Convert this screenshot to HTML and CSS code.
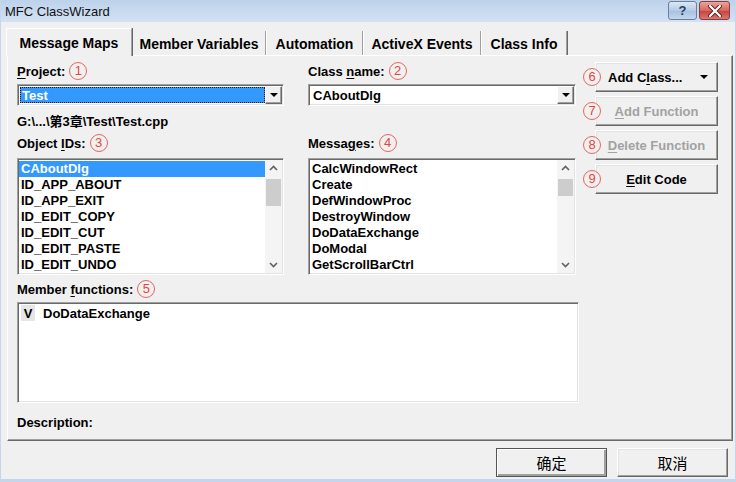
FILE: index.html
```html
<!DOCTYPE html>
<html>
<head>
<meta charset="utf-8">
<title>MFC ClassWizard</title>
<link rel="stylesheet" href="styles.css">
</head>
<body>
<div class="window">
  <div class="titlebar">
    <span class="title">MFC ClassWizard</span>
    <div class="tb-buttons">
      <span class="tb-btn tb-help">?</span>
      <span class="tb-btn tb-close">
        <svg width="14" height="12" viewBox="0 0 14 12"><path d="M2 1 L12 11 M12 1 L2 11" stroke="#5a2020" stroke-width="4" stroke-linecap="round"/><path d="M2 1 L12 11 M12 1 L2 11" stroke="#ffffff" stroke-width="2.2" stroke-linecap="round"/></svg>
      </span>
    </div>
  </div>
  <div class="client">
    <div class="tabs">
      <div class="tab active w1">Message Maps</div>
      <div class="tab w2">Member Variables</div>
      <div class="tab w3">Automation</div>
      <div class="tab w4">ActiveX Events</div>
      <div class="tab w5">Class Info</div>
    </div>
    <div class="panel">
      <div class="top">
        <div class="label c1 r1"><span><u>P</u>roject:</span><span class="circ">1</span></div>
        <div class="combo c1 r2">
          <div class="field selected"><span class="focus">Test</span></div>
          <div class="arrow"><span class="tri"></span></div>
        </div>
        <div class="path c1 r3">G:\...\第3章\Test\Test.cpp</div>
        <div class="label c1 r4"><span>Object <u>I</u>Ds:</span><span class="circ">3</span></div>
        <div class="listbox c1 r5">
          <div class="items">
            <div class="item sel">CAboutDlg</div>
            <div class="item">ID_APP_ABOUT</div>
            <div class="item">ID_APP_EXIT</div>
            <div class="item">ID_EDIT_COPY</div>
            <div class="item">ID_EDIT_CUT</div>
            <div class="item">ID_EDIT_PASTE</div>
            <div class="item">ID_EDIT_UNDO</div>
          </div>
          <div class="scroll">
            <svg class="chev" width="17" height="17" viewBox="0 0 17 17"><path d="M5 10 L8.5 6.5 L12 10" fill="none" stroke="#606060" stroke-width="1.6"/></svg>
            <div class="track"><div class="thumb t1"></div></div>
            <svg class="chev" width="17" height="17" viewBox="0 0 17 17"><path d="M5 7 L8.5 10.5 L12 7" fill="none" stroke="#606060" stroke-width="1.6"/></svg>
          </div>
        </div>

        <div class="label c3 r1"><span>Class <u>n</u>ame:</span><span class="circ">2</span></div>
        <div class="combo c3 r2">
          <div class="field">CAboutDlg</div>
          <div class="arrow"><span class="tri"></span></div>
        </div>
        <div class="label c3 r4"><span>Messa<u>g</u>es:</span><span class="circ">4</span></div>
        <div class="listbox c3 r5">
          <div class="items">
            <div class="item">CalcWindowRect</div>
            <div class="item">Create</div>
            <div class="item">DefWindowProc</div>
            <div class="item">DestroyWindow</div>
            <div class="item">DoDataExchange</div>
            <div class="item">DoModal</div>
            <div class="item">GetScrollBarCtrl</div>
          </div>
          <div class="scroll">
            <svg class="chev" width="17" height="17" viewBox="0 0 17 17"><path d="M5 10 L8.5 6.5 L12 10" fill="none" stroke="#606060" stroke-width="1.6"/></svg>
            <div class="track"><div class="thumb t2"></div></div>
            <svg class="chev" width="17" height="17" viewBox="0 0 17 17"><path d="M5 7 L8.5 10.5 L12 7" fill="none" stroke="#606060" stroke-width="1.6"/></svg>
          </div>
        </div>

        <div class="btncol c5">
          <div class="bwrap"><span class="circ over">6</span><div class="btn addclass"><span>Add C<u>l</u>ass...</span><span class="btri"></span></div></div>
          <div class="bwrap"><span class="circ over">7</span><div class="btn disabled"><u>A</u>dd Function</div></div>
          <div class="bwrap"><span class="circ over">8</span><div class="btn disabled"><u>D</u>elete Function</div></div>
          <div class="bwrap"><span class="circ over">9</span><div class="btn"><u>E</u>dit Code</div></div>
        </div>
      </div>

      <div class="label mlabel"><span>Member <u>f</u>unctions:</span><span class="circ">5</span></div>
      <div class="memberlist">
        <div class="mitem"><span class="vbox">V</span><span>DoDataExchange</span></div>
      </div>
      <div class="desc">Description:</div>
    </div>
    <div class="footer">
      <div class="fbtn ok">确定</div>
      <div class="fbtn">取消</div>
    </div>
  </div>
</div>
</body>
</html>
```
FILE: styles.css
```css
* { box-sizing: border-box; }
html, body { margin: 0; padding: 0; }
body {
  width: 736px; height: 482px; overflow: hidden;
  background: #f0f0f0;
  font-family: "Liberation Sans", Arial, sans-serif;
  font-size: 13px; font-weight: bold; color: #000;
}
u { text-decoration: underline; text-underline-offset: 2px; }
.window {
  width: 736px; height: 482px;
  display: flex; flex-direction: column;
  border-left: 1px solid #c3d6ec;
  border-right: 1px solid #c3d6ec;
  border-bottom: 3px solid #c3d6ec;
}
.titlebar {
  height: 22px; flex: none;
  display: flex; align-items: center;
  padding: 0 5px 0 4px;
  background: linear-gradient(#bcd2eb, #d3e2f3);
}
.title { font-weight: normal; font-size: 13px; color: #111; }
.tb-buttons { margin-left: auto; display: flex; gap: 2px; align-self: flex-start; margin-top: 1px; }
.tb-btn {
  height: 19px; display: flex; align-items: center; justify-content: center;
  border: 1px solid #6d7f98; border-radius: 3px;
}
.tb-help {
  width: 29px; color: #2c3e5a; font-size: 13px; font-weight: bold;
  background: linear-gradient(#dbe7f5, #b4cbe6 50%, #a6c0e0 51%, #c3d6ee);
}
.tb-close {
  width: 31px; border-color: #8a3b3b;
  background: linear-gradient(#eba59a, #d9645a 50%, #c7423a 51%, #d8776e);
}
.client { flex: 1; display: flex; flex-direction: column; padding: 0 3px 0 5px; }
.tabs { margin-top: 6px; height: 27px; display: flex; align-items: flex-end; padding-left: 0; }
.tab {
  height: 24px; display: flex; align-items: center; justify-content: center;
  font-size: 14px; padding-top: 1px;
  border-left: 1px solid #fff;
  border-right: 1px solid #a0a0a0;
  box-shadow: 1px 0 0 #696969;
}
.tab.active {
  height: 28px; margin-bottom: -1px; position: relative; z-index: 1;
  background: #f0f0f0; border-top: 1px solid #fff; padding-top: 0;
}
.w1 { width: 126px; }
.w2 { width: 134px; }
.w3 { width: 97px; }
.w4 { width: 118px; }
.w5 { width: 86px; }
.panel {
  width: 726px; height: 386px; margin-left: 1px;
  border-top: 1px solid #fff; border-left: 1px solid #fff;
  border-right: 1px solid #696969; border-bottom: 1px solid #696969;
  box-shadow: inset -1px -1px 0 #a0a0a0;
  padding: 6px 0 0 9px;
}
.top {
  display: grid;
  grid-template-columns: 267px 24px 268px 19px 123px;
  grid-template-rows: 22px 30px 20px 24px 117px;
}
.c1 { grid-column: 1; }
.c3 { grid-column: 3; }
.c5 { grid-column: 5; grid-row: 1 / span 5; }
.r1 { grid-row: 1; } .r2 { grid-row: 2; } .r3 { grid-row: 3; } .r4 { grid-row: 4; } .r5 { grid-row: 5; }
.label { height: 18px; display: flex; align-items: center; gap: 4px; }
.circ {
  width: 18px; height: 18px; border-radius: 50%;
  border: 1px solid #e4675f; color: #e0483f;
  font-weight: normal; font-size: 13px; line-height: 16px; text-align: center;
  font-family: "Liberation Sans", Arial, sans-serif;
  background: transparent; flex: none;
}
.combo {
  height: 22px; display: flex; padding: 1px; background: #fff;
  border: 1px solid; border-color: #a0a0a0 #fff #fff #a0a0a0;
  box-shadow: inset 1px 1px 0 #696969, inset -1px -1px 0 #e3e3e3;
}
.field { flex: 1; display: flex; align-items: center; padding-left: 2px; margin: 1px 0 1px 1px; }
.field.selected { background: #3399ff; color: #fff; padding: 0; }
.focus { display: flex; align-items: center; width: 100%; height: 100%; border: 1px dotted #1a1a1a; padding-left: 1px; }
.arrow {
  width: 17px; background: #f0f0f0; display: flex; align-items: center; justify-content: center;
  border: 1px solid; border-color: #fff #696969 #696969 #fff;
  box-shadow: inset -1px -1px 0 #a0a0a0;
}
.tri { width: 0; height: 0; border-left: 4px solid transparent; border-right: 4px solid transparent; border-top: 4px solid #000; }
.path { height: 16px; line-height: 16px; font-family: "Liberation Sans", "Noto Sans CJK SC", sans-serif; }
.listbox {
  height: 117px; display: flex; background: #fff;
  border: 1px solid; border-color: #a0a0a0 #fff #fff #a0a0a0;
  box-shadow: inset 1px 1px 0 #696969, inset -1px -1px 0 #e3e3e3;
  padding: 1px;
}
.items { flex: 1; padding-top: 1px; overflow: hidden; }
.item { height: 16px; line-height: 16px; padding-left: 2px; white-space: nowrap; }
.item.sel { background: #3399ff; color: #fff; }
.scroll { width: 17px; display: flex; flex-direction: column; background: #f4f4f4; }
.chev { flex: none; display: block; }
.track { flex: 1; }
.thumb { background: #cdcdcd; margin: 0 1px; }
.t1 { margin-top: 2px; height: 27px; }
.t2 { margin-top: 2px; height: 17px; }
.btncol { display: flex; flex-direction: column; gap: 4px; }
.bwrap { position: relative; }
.circ.over { position: absolute; left: -12px; top: 6px; z-index: 2; background: #f0f0f0; }
.btn {
  height: 30px; display: flex; align-items: center; justify-content: center;
  border: 1px solid; border-color: #fff #696969 #696969 #fff;
  box-shadow: inset -1px -1px 0 #a0a0a0, inset 1px 1px 0 #e3e3e3;
  background: #f0f0f0;
}
.btn.disabled { color: #a2a2a2; }
.btn.addclass { justify-content: flex-start; padding-left: 12px; }
.btri { margin-left: 18px; width: 0; height: 0; border-left: 4px solid transparent; border-right: 4px solid transparent; border-top: 4px solid #000; }
.mlabel { margin-top: 5px; }
.memberlist {
  margin-top: 4px; width: 562px; height: 101px; background: #fff;
  border: 1px solid; border-color: #a0a0a0 #fff #fff #a0a0a0;
  box-shadow: inset 1px 1px 0 #696969, inset -1px -1px 0 #e3e3e3;
  padding: 2px 0 0 3px;
}
.mitem { height: 16px; display: flex; align-items: center; }
.vbox { width: 14px; height: 16px; background: #e6e6e6; display: flex; align-items: center; justify-content: center; margin-right: 8px; }
.desc { margin-top: 12px; height: 16px; line-height: 16px; }
.footer { display: flex; justify-content: flex-end; gap: 10px; padding: 7px 4px 0 0; }
.fbtn {
  width: 111px; height: 29px; display: flex; align-items: center; justify-content: center;
  font-family: "Noto Sans CJK SC", sans-serif; font-weight: normal; font-size: 15px;
  border: 1px solid; border-color: #fff #696969 #696969 #fff;
  box-shadow: inset -1px -1px 0 #a0a0a0, inset 1px 1px 0 #e3e3e3;
}
.fbtn.ok { border-color: #555; box-shadow: inset 1px 1px 0 #fff, inset -2px -2px 0 #a0a0a0; }
```
